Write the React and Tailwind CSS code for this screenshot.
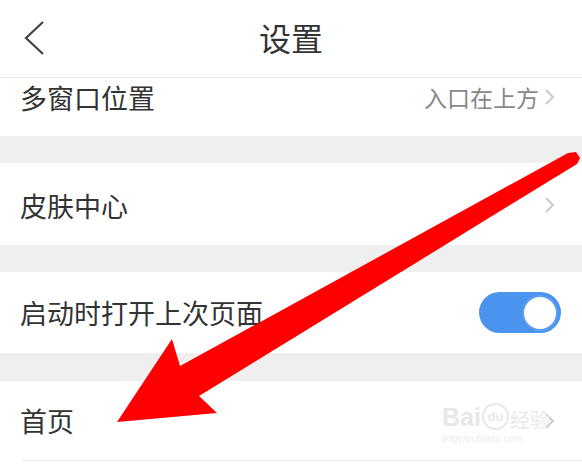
import React from 'react';

const Chevron = () => (
  <svg width="12" height="18" viewBox="0 0 12 18" className="shrink-0">
    <path d="M2 2 L9 9 L2 16" fill="none" stroke="#c8c8cc" strokeWidth="1.8" />
  </svg>
);

const Toggle = () => (
  <div className="w-[82px] h-[41px] rounded-full bg-[#4a93ee] flex items-center justify-end pr-[3px]">
    <div className="w-[36px] h-[36px] rounded-full bg-white border-2 border-[#5d9ff0]" />
  </div>
);

const Gap = () => <div className="h-[27px] bg-[#efefef]" />;

const Arrow = () => (
  <svg className="absolute inset-0 pointer-events-none" width="582" height="466" viewBox="0 0 582 466">
    <polygon
      points="568,153 576,152 580,158 577,164 199,396 217,413 117,422 172,339 180,366"
      fill="#ff0000"
    />
  </svg>
);

const Watermark = () => (
  <div className="absolute left-[442px] top-[403px] flex flex-col items-start pointer-events-none select-none">
    <div className="flex items-end gap-[1px] text-[#e8e8e8]">
      <span className="text-[25px] leading-none font-bold" style={{ fontFamily: '"Liberation Sans", sans-serif' }}>Bai</span>
      <span className="relative w-[27px] h-[27px] rounded-full border-2 border-[#e8e8e8] flex items-center justify-center text-[13px] leading-none font-bold" style={{ fontFamily: '"Liberation Sans", sans-serif' }}>du</span>
      <span className="text-[20px] leading-none" style={{ fontFamily: '"Noto Sans CJK SC", sans-serif' }}>经验</span>
    </div>
    <span className="mt-[4px] text-[10px] leading-none text-[#ededed]" style={{ fontFamily: '"Liberation Sans", sans-serif' }}>jingyan.baidu.com</span>
  </div>
);

export default function App() {
  return (
    <div
      className="relative w-[582px] h-[466px] overflow-hidden bg-white text-[#333333]"
      style={{ fontFamily: '"Noto Sans CJK SC", "Noto Sans", sans-serif' }}
    >
      <div className="h-[78px] border-b border-[#e6e6e6] flex items-center relative">
        <svg className="absolute left-[22px] top-[20px]" width="24" height="36" viewBox="0 0 24 36">
          <path d="M21 2 L4 18 L21 34" fill="none" stroke="#444444" strokeWidth="2.2" />
        </svg>
        <div className="flex-1 text-center text-[32px] leading-none pb-[4px]">设置</div>
      </div>

      <div className="h-[58px] flex items-center justify-between pl-[20px] pr-[26px] pb-[20px]">
        <span className="text-[27px] leading-none">多窗口位置</span>
        <div className="flex items-center gap-[5px]">
          <span className="text-[23px] leading-none text-[#888888]">入口在上方</span>
          <Chevron />
        </div>
      </div>

      <Gap />

      <div className="h-[82px] flex items-center justify-between pl-[20px] pr-[26px] pt-[2px]">
        <span className="text-[27px] leading-none">皮肤中心</span>
        <Chevron />
      </div>

      <Gap />

      <div className="h-[81px] flex items-center justify-between pl-[20px] pr-[21px]">
        <span className="text-[27px] leading-none">启动时打开上次页面</span>
        <Toggle />
      </div>

      <div className="h-[28px] bg-[#efefef]" />

      <div className="ml-[22px] h-[80px] border-b border-[#ececec] flex items-center justify-between pr-[26px]">
        <span className="text-[27px] leading-none -ml-[2px]">首页</span>
        <Chevron />
      </div>

      <Watermark />
      <Arrow />
    </div>
  );
}
